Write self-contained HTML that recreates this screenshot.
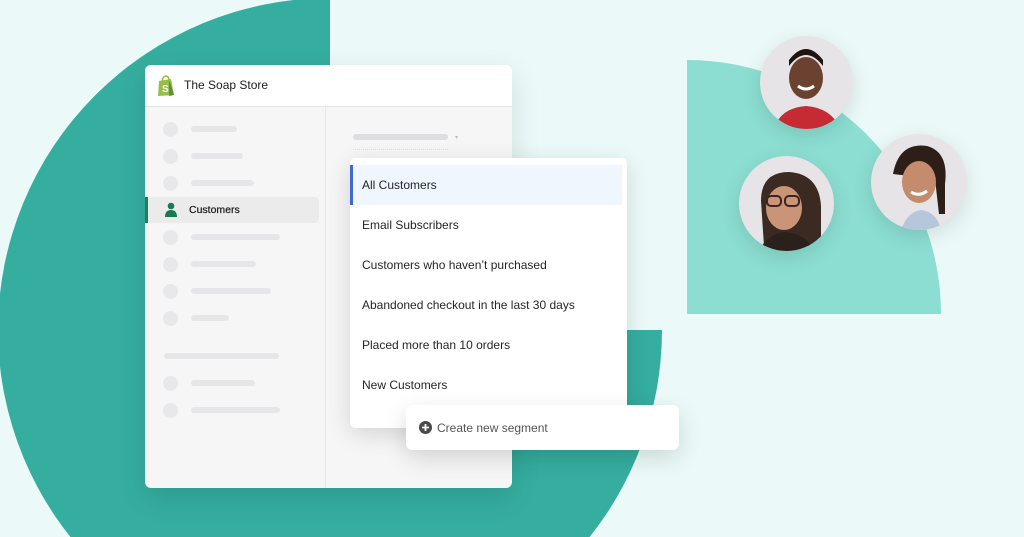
<!DOCTYPE html>
<html style="overflow:hidden;width:1024px;height:537px"><head><style>
*{margin:0;padding:0;box-sizing:border-box}
html,body{width:1024px;height:537px;overflow:hidden}
body{background:#ebfaf8;font-family:"Liberation Sans",sans-serif;position:relative}
.a{position:absolute}
.sk{position:absolute;background:#e6e6e8;border-radius:4px}
.dot{position:absolute;width:15px;height:15px;border-radius:50%;background:#e8e8ea}
.it{position:absolute;left:12px;font-size:12px;color:#262626}
.av{position:absolute;border-radius:50%;background:#e6e4e6;box-shadow:0 6px 20px rgba(0,0,0,.12);overflow:hidden}
</style></head><body>
<svg class="a" style="left:0;top:0" width="1024" height="537">
<path d="M330 330 L662 330 A332 332 0 0 1 330 662 A332 332 0 0 1 -2 330 A332 332 0 0 1 330 -2 Z" fill="#35ae9f"/>
<path d="M687 60 A254 254 0 0 1 941 314 L687 314 Z" fill="#8cded2"/>
</svg>
<div class="av" style="left:760px;top:36px;width:93px;height:93px">
<svg width="93" height="93"><ellipse cx="46" cy="42" rx="17" ry="21" fill="#6b4230"/><path d="M29 30 Q46 8 63 30 L63 24 Q46 2 29 24Z" fill="#1e1410"/><path d="M14 93 Q20 72 46 70 Q72 72 80 93Z" fill="#c62a33"/><path d="M38 50 Q46 56 54 50" stroke="#fff" stroke-width="3" fill="none"/></svg></div>
<div class="av" style="left:739px;top:156px;width:95px;height:95px">
<svg width="95" height="95"><path d="M22 45 Q22 16 50 16 Q80 18 82 50 L82 85 L70 90 L25 90Z" fill="#3b2a22"/><ellipse cx="45" cy="52" rx="18" ry="22" fill="#c99478"/><path d="M20 95 Q28 78 46 76 Q68 78 75 95Z" fill="#2a201c"/><rect x="28" y="40" width="14" height="10" rx="4" fill="none" stroke="#3a2520" stroke-width="2"/><rect x="46" y="40" width="14" height="10" rx="4" fill="none" stroke="#3a2520" stroke-width="2"/></svg></div>
<div class="av" style="left:871px;top:134px;width:96px;height:96px">
<svg width="96" height="96"><path d="M22 40 Q28 8 56 12 Q78 18 74 50 L74 80 L68 80 L64 45Z" fill="#2d1e18"/><ellipse cx="48" cy="48" rx="17" ry="21" fill="#c48b6c"/><path d="M30 96 Q36 78 50 76 Q66 78 70 96Z" fill="#b6c7dc"/><path d="M40 58 Q48 63 56 57" stroke="#fff" stroke-width="3" fill="none"/></svg></div>
<div class="a" style="left:145px;top:65px;width:367px;height:423px;background:#f6f6f7;border-radius:6px;box-shadow:0 10px 30px rgba(0,0,0,.12);overflow:hidden">
 <div class="a" style="left:0;top:0;width:367px;height:42px;background:#fff;border-bottom:1px solid #e3e3e3"></div>
 <svg class="a" style="left:11px;top:10px" width="20" height="22"><path d="M3 6 L15 4 L18 20 L2 21Z" fill="#95bf47"/><path d="M13 4 L18 20 L13 21Z" fill="#5e8e3e"/><path d="M6 6 Q7 1 10 1 Q13 1 13 6" stroke="#95bf47" fill="none" stroke-width="1.5"/><text x="6" y="17" font-size="10" font-weight="bold" fill="#fff" font-family="Liberation Sans">S</text></svg>
 <div class="a" style="left:39px;top:13px;font-size:12px;color:#1d1d1d">The Soap Store</div>
 <div class="a" style="left:180px;top:42px;width:1px;height:381px;background:#e8e8e8"></div>
 <div class="dot" style="left:18px;top:57px"></div><div class="sk" style="left:46px;top:61px;width:46px;height:6px"></div>
 <div class="dot" style="left:18px;top:84px"></div><div class="sk" style="left:46px;top:88px;width:52px;height:6px"></div>
 <div class="dot" style="left:18px;top:111px"></div><div class="sk" style="left:46px;top:115px;width:63px;height:6px"></div>
 <div class="a" style="left:1px;top:132px;width:173px;height:26px;background:#ebebec;border-radius:4px"></div>
 <div class="a" style="left:0;top:132px;width:3px;height:26px;background:#1e7f5e"></div>
 <svg class="a" style="left:19px;top:137px" width="14" height="16"><circle cx="7" cy="4" r="3.3" fill="#1a7a56"/><path d="M1 15 Q1 8 7 8 Q13 8 13 15Z" fill="#1a7a56"/></svg>
 <div class="a" style="left:44px;top:139px;font-size:10.5px;color:#222;-webkit-text-stroke:0.25px #222">Customers</div>
 <div class="dot" style="left:18px;top:165px"></div><div class="sk" style="left:46px;top:169px;width:89px;height:6px"></div>
 <div class="dot" style="left:18px;top:192px"></div><div class="sk" style="left:46px;top:196px;width:65px;height:6px"></div>
 <div class="dot" style="left:18px;top:219px"></div><div class="sk" style="left:46px;top:223px;width:80px;height:6px"></div>
 <div class="dot" style="left:18px;top:246px"></div><div class="sk" style="left:46px;top:250px;width:38px;height:6px"></div>
 <div class="sk" style="left:19px;top:288px;width:115px;height:6px"></div>
 <div class="dot" style="left:18px;top:311px"></div><div class="sk" style="left:46px;top:315px;width:64px;height:6px"></div>
 <div class="dot" style="left:18px;top:338px"></div><div class="sk" style="left:46px;top:342px;width:89px;height:6px"></div>
 <div class="sk" style="left:208px;top:69px;width:95px;height:6px;background:#dedee0"></div>
 <div class="a" style="left:310px;top:69px;font-size:6px;color:#bbb">▾</div>
 <div class="a" style="left:208px;top:84px;width:95px;border-top:1px dotted #ddd"></div>
</div>
<div class="a" style="left:350px;top:158px;width:277px;height:270px;background:#fff;border-radius:5px;box-shadow:0 6px 24px rgba(0,0,0,.14)">
 <div class="a" style="left:0;top:7px;width:272px;height:40px;background:#eff6fd;border-left:3px solid #3e6ad0"></div>
 <div class="it" style="top:20px">All Customers</div>
 <div class="it" style="top:60px">Email Subscribers</div>
 <div class="it" style="top:100px">Customers who haven’t purchased</div>
 <div class="it" style="top:140px">Abandoned checkout in the last 30 days</div>
 <div class="it" style="top:180px">Placed more than 10 orders</div>
 <div class="it" style="top:220px">New Customers</div>
</div>
<div class="a" style="left:406px;top:405px;width:273px;height:45px;background:#fff;border-radius:6px;box-shadow:0 8px 24px rgba(0,0,0,.14)">
 <svg class="a" style="left:13px;top:16px" width="13" height="13"><circle cx="6.5" cy="6.5" r="6.5" fill="#4a4a4a"/><path d="M6.5 3v7M3 6.5h7" stroke="#fff" stroke-width="1.8"/></svg>
 <div class="a" style="left:31px;top:16px;font-size:12px;color:#555">Create new segment</div>
</div>
</body></html>
